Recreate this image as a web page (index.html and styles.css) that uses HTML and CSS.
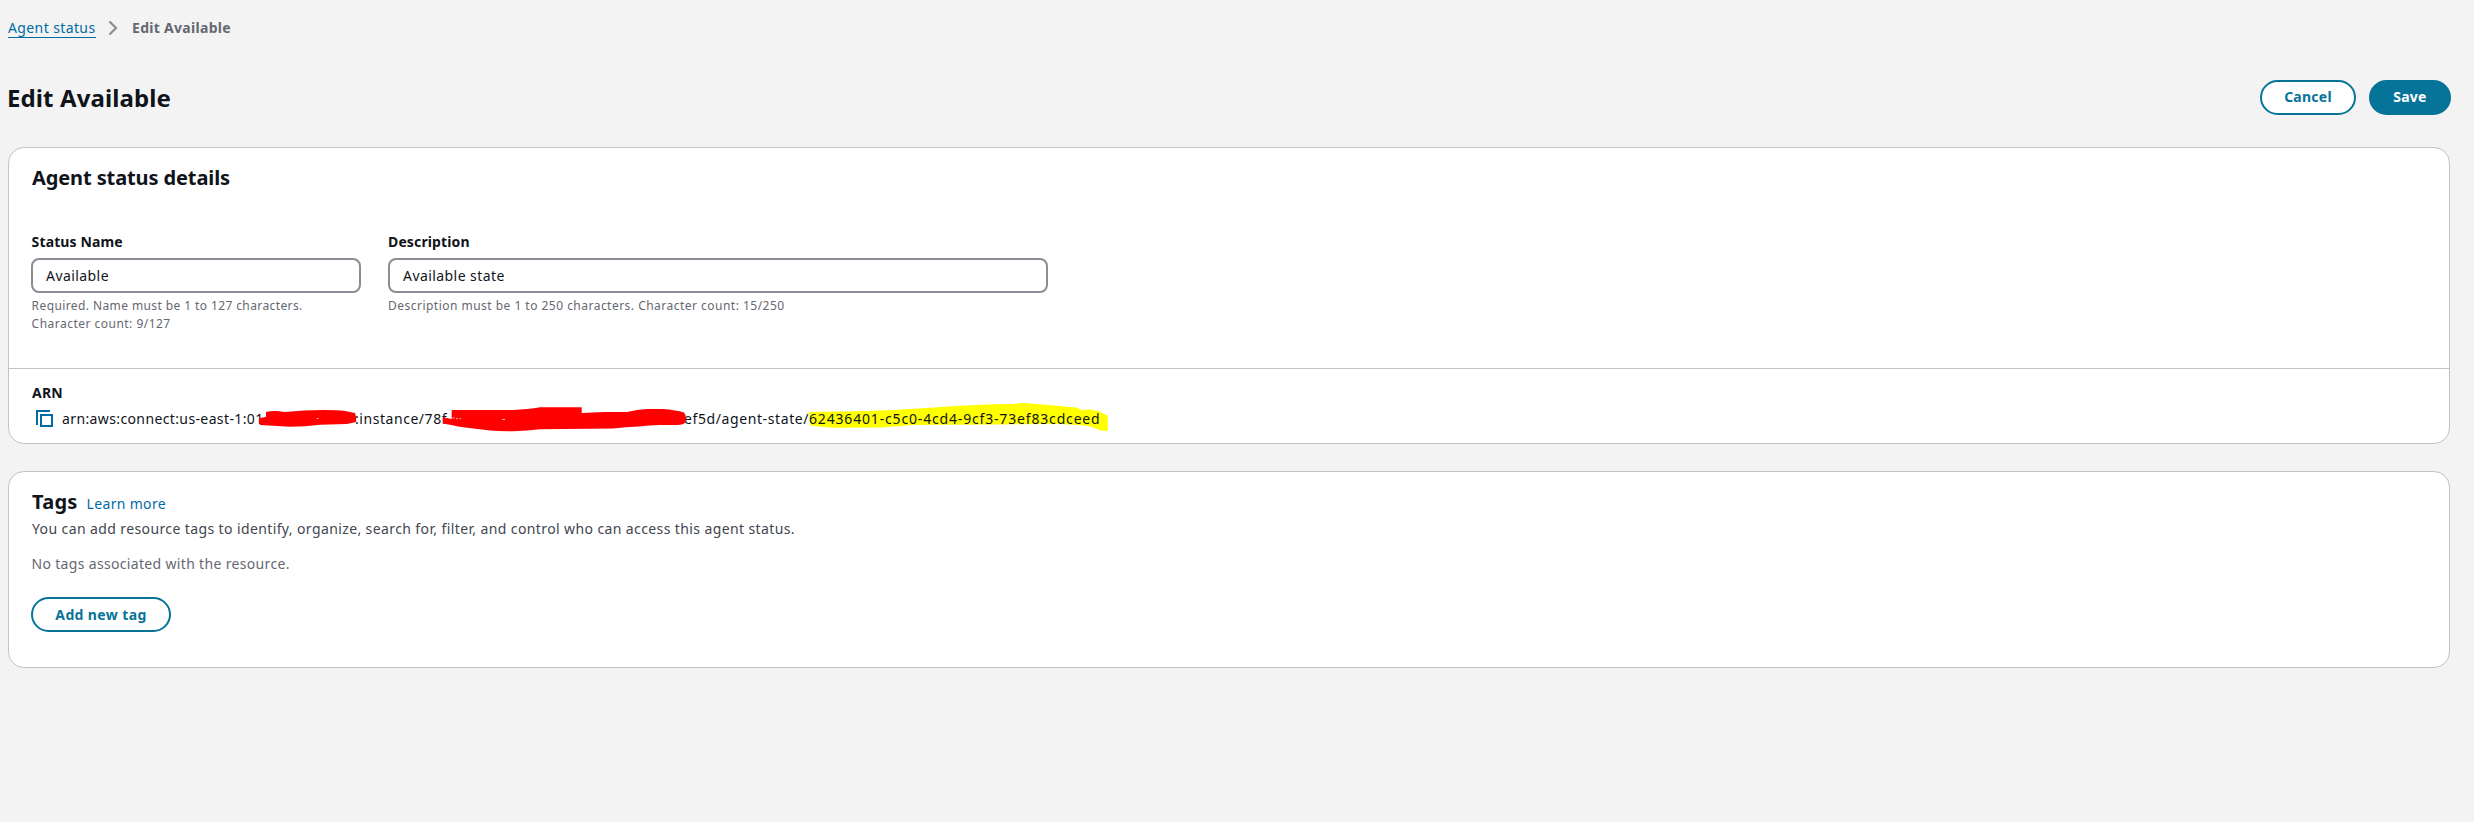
FILE: index.html
```html
<!DOCTYPE html>
<html lang="en">
<head>
<meta charset="utf-8">
<title>Edit Available</title>
<link rel="stylesheet" href="styles.css">
</head>
<body>
<nav class="breadcrumbs">
  <a class="crumb-link" href="#">Agent status</a>
  <svg class="chevron" width="16" height="16" viewBox="0 0 16 16"><path d="M4.500 1.500 11 8 4.500 14.500"/></svg>
  <span class="crumb-current">Edit Available</span>
</nav>

<header class="page-header">
  <h1>Edit Available</h1>
  <div class="actions">
    <button class="btn btn-cancel">Cancel</button>
    <button class="btn btn-save">Save</button>
  </div>
</header>

<main>
  <section class="card">
    <div class="details">
      <h2>Agent status details</h2>
      <div class="fields">
        <div class="field field-name">
          <label for="name">Status Name</label>
          <input id="name" value="Available">
          <p class="hint">Required. Name must be 1 to 127 characters.</p>
          <p class="hint hint-count">Character count: 9/127</p>
        </div>
        <div class="field field-desc">
          <label for="desc">Description</label>
          <input id="desc" value="Available state">
          <p class="hint hint-count">Description must be 1 to 250 characters. Character count: 15/250</p>
        </div>
      </div>
    </div>
    <div class="arn">
      <div class="arn-label">ARN</div>
      <div class="arn-row">
        <svg class="marker" width="1090" height="44" viewBox="31 400 1090 44">
          <path fill="#ff0" d="M809 412 840 411.5 866 411 893 410 926 408 960 405.7 993 404.3 1013 404 1023 403 1043 404.5 1060 406 1076 407.5 1082 410 1090 409.500 1100 411.500 1103 413.500 1107.700 415.500V431L1100 430.500 1094 427.500 1085 425.500 1060 424 993 424.500 913 425 881 427.500 832 427.800 810 425.500Z"/>
        </svg>
        <svg class="copy" width="17" height="17" viewBox="0 0 17 17"><path d="M14 1H1V15M5 5H16V16H5Z"/></svg>
        <span class="arn-text arn-prefix">arn:aws:connect:us-east-1:01</span>
        <span class="arn-text arn-instance">:instance/78f</span>
        <span class="arn-text arn-state">ef5d/agent-state/</span>
        <span class="arn-text arn-id">62436401-c5c0-4cd4-9cf3-73ef83cdceed</span>
        <svg class="scribble" width="1090" height="44" viewBox="31 400 1090 44">
          <path d="M266 412Q272 410.500 277 411L285 412Q304 410 323 410 338 410 345 411L355 413Q357 418 356 422L347 424 320 424.700Q305 426.500 290 426.700L273 425.700 260 425Q258.500 421 259.500 418.300L266 416.700Z"/>
          <path d="M451.700 410H513Q528 409.500 540 407.300H581.700V413L605 412H627Q637 409.300 647 409H663Q676 410 684 412.500 687 416 685.500 422 684 425 677 425H660Q640 426 613 428.500L540 429.300Q528 431 513 431.300 500 431.500 490 430.500L463 427.300Q450 425 442.700 423.300V417.300L451.700 419Z"/>
          <path class="speck" d="M452.500 418.300 454.500 417.800M456 419 458 418.200M459.500 418.500H461M502 419.500H505M316.500 418.500H318.500"/>
        </svg>
      </div>
    </div>
  </section>

  <section class="card tags">
    <div class="tags-head"><h2>Tags</h2><a class="learn" href="#">Learn more</a></div>
    <p class="tags-desc">You can add resource tags to identify, organize, search for, filter, and control who can access this agent status.</p>
    <p class="tags-empty">No tags associated with the resource.</p>
    <button class="btn btn-add">Add new tag</button>
  </section>
</main>
</body>
</html>
```
FILE: styles.css
```css
* { box-sizing: border-box; }

body {
  margin: 0;
  padding: 17px 24px 0 8px;
  background: #f3f3f3;
  color: #0f141a;
  font: 14px/22px "Noto Sans", "Open Sans", sans-serif;
}

h1, h2, p { margin: 0; }
a { color: #006ba4; text-decoration: none; }

.breadcrumbs { display: flex; height: 22px; }
.crumb-link {
  height: 21px;
  width: 88px;
  letter-spacing: 0.39px;
  white-space: nowrap;
  border-bottom: 1px solid #006ba4;
}
.chevron {
  margin: 3px 11px 0 9px;
  fill: none;
  stroke: #8c8c94;
  stroke-width: 2.2;
}
.crumb-current { font-weight: 700; color: #656871; letter-spacing: 0.3px; }

.page-header {
  display: flex;
  justify-content: space-between;
  align-items: flex-start;
  height: 35px;
  margin: 41px 0 32px;
}
h1 { margin-top: 3px; margin-left: -1px; font-size: 24px; line-height: 30px; letter-spacing: 0.1px; }
h2 { font-size: 20px; line-height: 24px; letter-spacing: -0.11px; }

.actions { display: flex; gap: 13px; margin-right: -1px; }
.btn {
  height: 35px;
  padding: 0 0 1px;
  border: 2px solid #067499;
  border-radius: 18px;
  background: #fff;
  color: #067499;
  font: 700 14px/20px "Noto Sans", "Open Sans", sans-serif;
  letter-spacing: 0.25px;
}
.btn-cancel { width: 96px; }
.btn-save { width: 82px; background: #067499; color: #fff; }
.btn-add { width: 140px; padding-bottom: 0; letter-spacing: 0.38px; }

.card {
  border: 1px solid #c2c2c8;
  border-radius: 16px;
  background: #fff;
}
.details { padding: 18px 22px 35px; border-bottom: 1px solid #c2c2c8; }
.details h2 { padding-left: 1px; }
.fields { display: flex; gap: 27px; margin-top: 41px; }
.field { display: flex; flex-direction: column; }
.field-name { width: 330px; }
.field-desc { width: 660px; }
label { font-weight: 700; letter-spacing: 0.13px; }
.field-name label, .field-name .hint { padding-left: 0.6px; }
input {
  height: 35px;
  margin: 5px 0 4px;
  padding: 0 13px;
  border: 2px solid #8c8c94;
  border-radius: 8px;
  background: #fff;
  color: #0f141a;
  font: inherit;
  letter-spacing: 0.43px;
}
.hint { font-size: 12px; line-height: 18px; color: #656871; letter-spacing: 0.4px; }
.hint-count { letter-spacing: 0.48px; }

.arn { padding: 13px 22px; }
.arn-label { padding-left: 1px; font-weight: 700; letter-spacing: 0.24px; }
.arn-row { position: relative; display: flex; margin-top: 4px; height: 22px; }
.marker, .scribble { position: absolute; left: 0; top: -8px; }
.copy { position: relative; margin: 2px 9px 0 5px; fill: none; stroke: #006ba4; stroke-width: 2; }
.arn-text { position: relative; white-space: nowrap; }
.arn-prefix { width: 293px; letter-spacing: 0.38px; }
.arn-instance { width: 329px; letter-spacing: 0.55px; }
.arn-state { width: 125px; letter-spacing: 0.6px; }
.arn-id { letter-spacing: 0.83px; }
.scribble { fill: #f00; }
.speck { fill: none; stroke: #fff; stroke-width: 0.7; }

.tags { margin-top: 27px; padding: 18px 22px 35px; }
.tags-head { display: flex; align-items: baseline; gap: 9px; height: 24px; padding-left: 1px; }
.tags h2 { letter-spacing: 0.25px; }
.learn { letter-spacing: 0.32px; }
.tags-desc { margin-top: 4px; padding-left: 1px; color: #424650; letter-spacing: 0.39px; }
.tags-empty { margin: 13px 0 22px; padding-left: 0.5px; color: #656871; letter-spacing: 0.33px; }
.tags .btn { display: block; }
```
